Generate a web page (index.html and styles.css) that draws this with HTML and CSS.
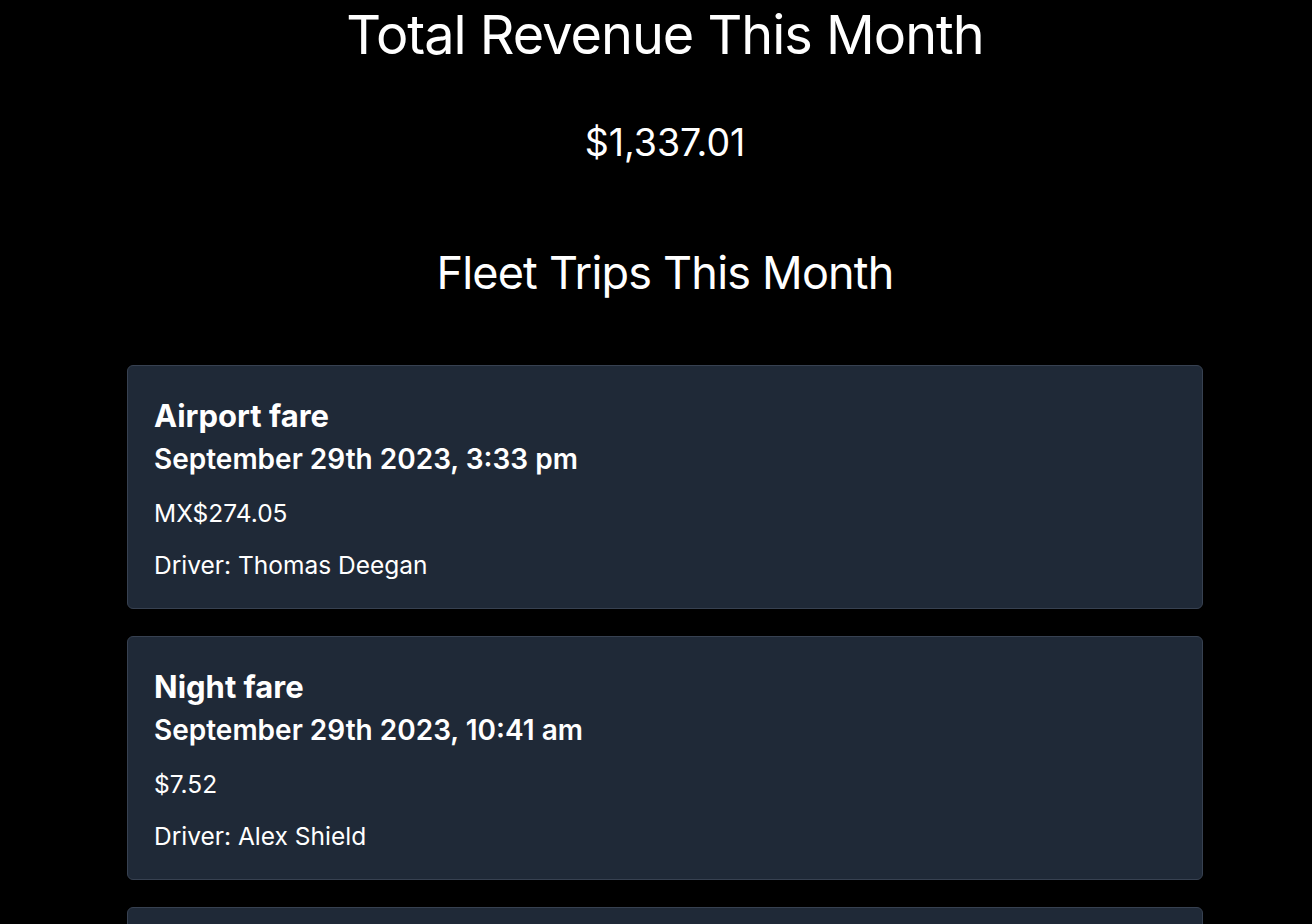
FILE: index.html
```html
<!DOCTYPE html>
<html lang="en">
<head>
<meta charset="utf-8">
<title>Fleet Dashboard</title>
<link rel="stylesheet" href="styles.css">
</head>
<body>
<main class="page">
  <h1 class="page-title">Total Revenue This Month</h1>
  <p class="revenue">$1,337.01</p>
  <h2 class="section-title">Fleet Trips This Month</h2>
  <ul class="trips">
    <li class="trip-card">
      <h3 class="trip-name">Airport fare</h3>
      <h4 class="trip-date">September 29th 2023, 3:33 pm</h4>
      <p class="trip-text">MX$274.05</p>
      <p class="trip-text">Driver: Thomas Deegan</p>
    </li>
    <li class="trip-card">
      <h3 class="trip-name">Night fare</h3>
      <h4 class="trip-date">September 29th 2023, 10:41 am</h4>
      <p class="trip-text">$7.52</p>
      <p class="trip-text">Driver: Alex Shield</p>
    </li>
    <li class="trip-card">
      <h3 class="trip-name">City fare</h3>
      <h4 class="trip-date">September 28th 2023, 6:12 pm</h4>
      <p class="trip-text">$12.40</p>
      <p class="trip-text">Driver: Thomas Deegan</p>
    </li>
  </ul>
</main>
</body>
</html>
```
FILE: styles.css
```css
html, body {
  margin: 0;
  padding: 0;
  background: #000;
  color: #fff;
  font-family: Inter, "Noto Sans", "Liberation Sans", sans-serif;
}

.page {
  display: flex;
  flex-direction: column;
  align-items: center;
  padding-left: 18px;
}

.page-title {
  margin: 0;
  font-size: 54px;
  font-weight: 400;
  line-height: 70px;
  letter-spacing: -1px;
}

.revenue {
  margin: 38px 0 0;
  font-size: 37.5px;
  line-height: 70px;
  font-weight: 400;
}

.section-title {
  margin: 63px 0 0;
  font-size: 45px;
  font-weight: 400;
  line-height: 64px;
  letter-spacing: -0.8px;
}

.trips {
  list-style: none;
  margin: 60px 0 0;
  padding: 0;
  width: 1076px;
  display: flex;
  flex-direction: column;
  gap: 27px;
}

.trip-card {
  background: #1f2937;
  border: 1px solid #374151;
  border-radius: 6px;
  padding: 28px 26px 26px;
  height: 244px;
  box-sizing: border-box;
}

.trip-name {
  margin: 0;
  font-size: 31px;
  font-weight: 700;
  line-height: 44px;
}

.trip-date {
  margin: 0;
  font-size: 28px;
  font-weight: 600;
  line-height: 42px;
}

.trip-text {
  margin: 14px 0 0;
  font-size: 24.5px;
  line-height: 38px;
}
```
